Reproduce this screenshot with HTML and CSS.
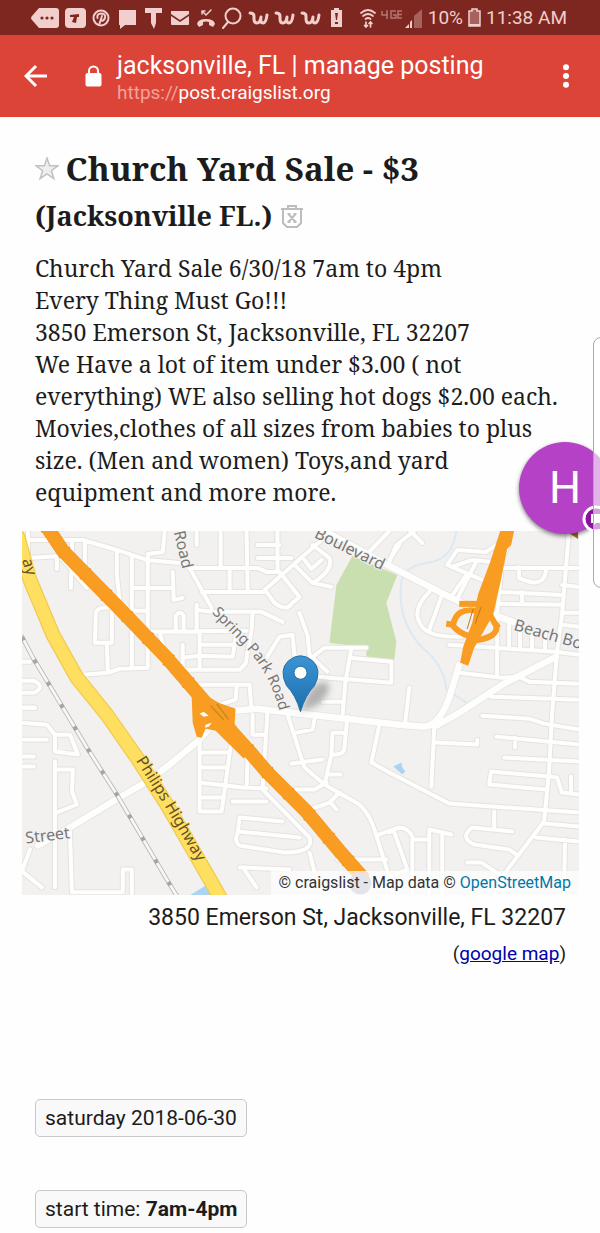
FILE: index.html
```html
<!DOCTYPE html>
<html lang="en">
<head>
<meta charset="utf-8">
<meta name="viewport" content="width=device-width, initial-scale=1">
<title>jacksonville, FL | manage posting</title>
<link rel="stylesheet" href="styles.css">
</head>
<body>
<div class="screen">
  <div class="status">
    <svg class="status-icons" viewBox="0 0 314 24" width="314" height="24" aria-hidden="true">
      <g fill="#f0cfcc">
        <path d="M8 2h17q3 0 3 3v14q0 3-3 3H8L1 14q-2-2 0-4z"/>
        <rect x="34" y="2" width="21" height="20" rx="4"/>
        <path d="M88 4h17v15H94l-5 4v-4h-1z"/>
        <path d="M114 2h17v5h-6v10l-2 6-3-6V7h-6z"/>
        <path d="M140 5h18v3l-9 6-9-6zM140 10l9 6 9-6v8q0 1-1 1h-16q-1 0-1-1z"/>
        <path d="M166 18q1-5 9-5t9 5l-2 3-4-2v-3q-3-1-6 0v3l-4 2z"/>
        <path d="M300 4h3V2h5v2h3v17h-11z"/>
      </g>
      <g fill="#7e2720">
        <circle cx="11" cy="12" r="1.6"/><circle cx="16" cy="12" r="1.6"/><circle cx="21" cy="12" r="1.6"/>
        <path d="M39 9l9-1v3h-2l-1 6-4-1 2-5h-4zM304 7h3l-1 7h-1zM304 16h3v2h-3z"/>
      </g>
      <g fill="none" stroke="#f0cfcc" stroke-width="2" stroke-linecap="round" stroke-linejoin="round">
        <circle cx="70" cy="12" r="7.5"/>
        <path d="M68 19l3-9M66.500 12q-1-4 3.500-4.500q5 0 4 4.500q-2 4-4 2"/>
        <path d="M171 5l4 4 5-5M171 8V5h3" stroke-width="1.500"/>
        <circle cx="202" cy="10" r="7.500"/><path d="M197 16l-5 6"/>
      </g>
      <g fill="none" stroke="#f0cfcc" stroke-width="3" stroke-linecap="round" stroke-linejoin="round">
        <path d="M219 7q4 0 4 3v3q0 4 3 4t4-6q-1 6 2 6t4-8"/>
        <path d="M245 7q4 0 4 3v3q0 4 3 4t4-6q-1 6 2 6t4-8"/>
        <path d="M271 7q4 0 4 3v3q0 4 3 4t4-6q-1 6 2 6t4-8"/>
      </g>
    </svg>
    <svg class="signal-icons" viewBox="0 0 64 24" width="64" height="24" aria-hidden="true">
      <g fill="none" stroke="#f0cfcc" stroke-width="1.700" stroke-linecap="round">
        <path d="M1 7q7-6 14 0M3 10q5-4 10 0M5.500 13q2.500-2 5 0"/>
        <path d="M6 16v5M4.500 19.500L6 21l1.500-1.500M10.500 21v-5M9 17.500l1.500-1.500 1.500 1.500"/>
      </g>
      <g fill="none" stroke="#b17671" stroke-width="1.500"><path d="M22 5v4h6M27 4v9M36 5h-5v7h5V9h-3M42 5h-4v7h4M38 8.500h4"/></g>
      <path fill="#a8625d" d="M54 10l8-7v19h-8z"/><path fill="#f0cfcc" d="M45 22l4-4v4zM50 16l2-2v8h-2z"/>
    </svg>
    <span>10%</span>
    <svg class="battery" viewBox="0 0 13 19" width="13" height="19" aria-hidden="true"><path d="M1 3h3V1h5v2h3v15H1z" fill="#a8625d" stroke="#f0cfcc" stroke-width="1.500"/><path d="M1 16h11v2H1z" fill="#f0cfcc"/></svg>
    <span>11:38 AM</span>
  </div>

  <header class="toolbar">
    <button class="icon-button back" type="button" aria-label="Back"><svg viewBox="0 0 24 24" width="24" height="24"><path d="M23 12H2M12 2L2 12l10 10" fill="none" stroke="#fff" stroke-width="3"/></svg></button>
    <svg class="lock" viewBox="0 0 17 22" width="17" height="22" aria-hidden="true"><path d="M4 9V6a4.500 4.500 0 0 1 9 0v3" fill="none" stroke="#fff" stroke-width="2"/><rect x="0.500" y="8" width="16" height="13.500" rx="2" fill="#fff"/></svg>
    <div class="heading">
      <div class="page-title">jacksonville, FL | manage posting</div>
      <div class="url"><span class="scheme">https://</span>post.craigslist.org</div>
    </div>
    <button class="icon-button more" type="button" aria-label="More options"><svg viewBox="0 0 8 24" width="8" height="24" fill="#fff"><circle cx="4" cy="3.200" r="3"/><circle cx="4" cy="12" r="3"/><circle cx="4" cy="20.800" r="3"/></svg></button>
  </header>

  <main class="posting">
    <h1 class="title">
      <svg class="star" viewBox="0 0 24 24" width="24" height="24" role="img" aria-label="Favorite"><path d="M12 1l2.600 7.700H23l-6.600 5 2.500 8L12 17l-6.900 4.700 2.500-8L1 8.700h8.400z" fill="#eee" stroke="#c2c2c2" stroke-width="1.500"/></svg>
      Church Yard Sale - $3
      <span class="place">(Jacksonville FL.)
        <svg class="trash" viewBox="0 0 22 23" width="22" height="23" role="img" aria-label="Hide"><path d="M0 4h22M7 4V1h8v3M2 4v14l4 4h10l4-4V4M7.500 9l7 8M14.500 9l-7 8M6.500 9h3M12.500 9h3M6.500 17h3M12.500 17h3" fill="none" stroke="#bdbdbd" stroke-width="2"/></svg>
      </span>
    </h1>
    <p class="body">Church Yard Sale 6/30/18 7am to 4pm<br>Every Thing Must Go!!!<br>3850 Emerson St, Jacksonville, FL 32207<br>We Have a lot of item under $3.00 ( not<br>everything) WE also selling hot dogs $2.00 each.<br>Movies,clothes of all sizes from babies to plus<br>size. (Men and women) Toys,and yard<br>equipment and more more.</p>

    <div class="map">
      <svg class="map-canvas" viewBox="22 531 558 365" role="img" aria-label="Map of 3850 Emerson St">
        <defs>
          <g id="streets">
            <path d="M28 540H83L117 550 147 560 180 563 190 568 212 608M28 531V558L60 556 87 588M57 557V569M71 573V588M72 541V553M85 541V565M117 552V575L120 602M132 557V612M165 531L163 552 148 554V668M197 531V545M132 588H173M173 572L174 600 183 598M133 611H148M145 632L247 631M176 630V616Q180 610 184 616V630M160 632L165 653M113 608Q96 606 96 614L95 643H112V612M107 645L108 673 84 675M108 673L120 669 148 668M132 632V668M183 645V670H240L246 664 252 630 253 613M183 658L200 656 233 657 237 632M200 632V670M200 645H235M197 605V632M197 610L213 612H262L283 622M202 592H265M190 568H258L267 572H280M22 662H30M22 681H34Q46 687 34 693H22M22 708H35"/>
            <path d="M221 531V568M247 531L248 590M230 570V590M258 545H280M258 558H292M278 531V572M265 590L330 533M267 592L275 603Q287 612 292 604L300 597 280 572M297 567L313 583 332 587M313 545L330 558Q334 570 315 582M305 560L312 569 322 560M200 685H250L252 711M237 687L236 700 217 706M300 613L308 635 310 655 328 672M267 658L280 637 293 635 295 656M312 658L325 648 352 648H367M352 648L346 682 343 717M350 658L392 662V683L317 677M323 702H343"/>
            <path d="M390 562L397 545 415 531M411 531L423 543M367 555L390 531M390 560L400 545M448 565L458 550 487 552 500 543M448 565L483 580M453 567L473 560 493 562M467 575L452 597M477 562L459 597M430 592Q412 610 421 624Q427 638 463 637M442 597L430 630M509 545L503 560 498 615M505 568H580M520 567V578Q545 590 547 570M570 531L563 615 558 652 553 715 550 772 545 822M502 592L563 595M502 604L563 605M523 592V604M563 585L580 587M563 613H580M563 625L580 627M450 645L557 652 580 655M498 618V675M510 620V647M521 628V648M533 633V649M546 635V650M460 673L503 678 520 677 530 682 580 684M492 697L580 700M410 688L406 722"/>
            <path d="M390 773L450 804 580 813M435 728L432 787M437 743L478 745V740M483 716L530 719 545 724 580 730M497 737L580 745M516 738V748M505 758L580 762M550 777L492 772 490 785 548 790M552 777L558 778 563 793 580 795M572 777V794M495 812V830M513 832L473 828Q460 838 475 845L510 850 517 855M545 822L507 872 495 896M545 824L580 827M537 838L580 842M566 840L565 896M468 863H482L505 878M390 833Q405 822 413 837V896M413 840H430M430 896V830L452 835M443 834V896M395 833L408 870 390 878"/>
            <path d="M288 715L305 768 325 785 360 805Q371 815 376 833L387 868 394 896M315 720L313 730 297 733M292 764L323 760M348 717L345 748Q345 756 332 755M325 785L332 755 333 733H345M330 775H341M200 783L243 788 267 789M280 790L315 790 327 783M310 810L330 803 340 793M331 803L337 810M380 725L372 763 392 774M268 712L263 790M253 715V735H265M248 760L247 787M232 740L222 812H200V740M200 753H230M200 768H228M200 798H223M233 802H267M263 790L310 838Q315 853 285 853L240 846Q234 842 238 834L240 818 283 822M238 832L300 838M310 853L315 872M240 868L290 870M243 868L257 888M338 860H387M380 835L400 828"/>
            <path d="M22 708H35M22 723L47 725 55 735H70L78 755 55 752V735M22 740H47M22 757H34M22 767H34M55 762V888M58 770H73L72 792 77 805 57 813M70 832L72 893H123V870H132V896M22 872L42 888M22 872L30 850"/>
          </g>
          <g id="avenues">
            <path d="M217 720L200 740 170 765 147 782 113 802 70 828 38 846M235 711L257 709 293 713 400 725 425 727Q440 726 450 698L460 665M435 727L457 715 503 685 557 657"/>
            <path d="M325 531L390 566 450 597 470 606 500 617 514 622"/>
          </g>
          <path id="i95" d="M47 527L63 551 120 609 167 658 205 702 250 752 267 772 307 812 343 855 365 880"/>
          <path id="us1" d="M18 537L30 580 53 635 77 678 107 715 137 758 167 805 217 892 224 905"/>
          <path id="rail" d="M22 637L33 658 63 708 87 748 117 795 170 885 178 898"/>
          <path id="spring" d="M212 613L243 645Q268 669 279 708L283 722"/>
          <path id="philips" d="M136 761L164 805 202 870"/>
          <linearGradient id="pinfill" x1="0" y1="0" x2="0" y2="1"><stop offset="0" stop-color="#3c94d4"/><stop offset="1" stop-color="#1b6fae"/></linearGradient>
          <filter id="soft" x="-50%" y="-50%" width="200%" height="200%"><feGaussianBlur stdDeviation="3"/></filter>
        </defs>
        <path fill="#f2f1f0" d="M22 531h558v365H22z"/>
        <path d="M457 531Q454 557 433 562 405 565 402 582 397 620 423 648 445 665 447 690L475 708" fill="none" stroke="#dde8f1" stroke-width="2"/>
        <path fill="#c9dfaf" d="M353 556l45 19-11 28 10 39-2 18-28-3v-9l-37-5 7-58z"/>
        <path fill="#abd3f3" d="M190 896l18-11 5 11zM394 767l8-4 1 5 3 4-3 3z"/>
        <g fill="none" stroke-linejoin="round" stroke-linecap="round">
          <use href="#streets" stroke="#e4e3e0" stroke-width="6"/>
          <use href="#avenues" stroke="#e4e3e0" stroke-width="8"/>
          <use href="#streets" stroke="#fefefc" stroke-width="4"/>
          <use href="#avenues" stroke="#fefefc" stroke-width="6.500"/>
          <use href="#rail" stroke="#b7b7b5" stroke-width="4.500"/>
          <use href="#rail" stroke="#f7f7f5" stroke-width="2.800"/>
          <use href="#rail" stroke="#a5a5a3" stroke-width="4" stroke-linecap="butt" stroke-dasharray="4 22"/>
          <use href="#us1" stroke="#efcb52" stroke-width="15"/>
          <use href="#us1" stroke="#ffdf60" stroke-width="12.500"/>
          <use href="#i95" stroke="#f69a20" stroke-width="14" stroke-linecap="butt"/>
          <use href="#i95" stroke="#ef9320" stroke-width="15" stroke-linecap="butt" stroke-dasharray="2 28"/>
          <use href="#i95" stroke="#f99c22" stroke-width="12.500" stroke-linecap="butt"/>
        </g>
        <path fill="#f99c22" d="M192 697l12-3 15 9 17 6-1 15 17 27-8 8-28-28-10-2-4 9-5-1-4-14z"/>
        <path d="M200 714l4-2 5 4-5 1zM206 725l6-2-3 4-4 1z" fill="#fff"/>
        <path d="M211 706l13 14M217 704l12 16" stroke="#c98a22" stroke-width="1.500"/>
        <path fill="#f99c22" d="M501 531h14l-3 14-4 4-6 30-8 36-19 33-6 18-8-3 3-16 9-24 6-29 12-32z"/>
        <g fill="none" stroke="#f99c22" stroke-linejoin="round" stroke-width="6">
          <path d="M482 604H460"/>
          <path d="M478 611Q457 607 454 625L447 624M452 624Q460 634 470 636M486 606L497 626 500 624M497 626Q500 638 472 641"/>
        </g>
        <path d="M474 609l-6 20M482 607l-6 17" stroke="#bd781b" stroke-width="1"/>
        <g class="map-label">
          <text transform="translate(174 532) rotate(77)">Road</text>
          <text transform="translate(22 560) rotate(74)" class="dark">ay</text>
          <text transform="translate(314 537) rotate(26)">Boulevard</text>
          <text transform="translate(514 630) rotate(16)">Beach Bo</text>
          <text transform="translate(26 844) rotate(-7)">Street</text>
          <text class="small"><textPath href="#spring">Spring Park Road</textPath></text>
          <text class="dark"><textPath href="#philips">Philips Highway</textPath></text>
        </g>
        <path d="M567 531l12 8V531z" fill="#a7681b"/>
        <circle cx="361" cy="884" r="11" fill="#aaa6bd"/>
        <path d="M301 712l8-20q12-14 20-8 3 10-12 22z" fill="#555" opacity="0.400" filter="url(#soft)"/>
        <path d="M301 712q-5-17-14-26-8-16 2-25 12-10 24 0 10 9 2 25-9 9-14 26z" fill="url(#pinfill)" stroke="#2870a3" stroke-width="1"/>
        <circle cx="301" cy="673" r="6.500" fill="#fff" stroke="#2870a3" stroke-width="1"/>
      </svg>
      <div class="attribution">© craigslist - Map data © <a href="#osm">OpenStreetMap</a></div>
    </div>

    <div class="address">3850 Emerson St, Jacksonville, FL 32207</div>
    <div class="map-link">(<a href="#map">google map</a>)</div>
    <div class="attributes">
      <span class="attribute">saturday 2018-06-30</span>
      <span class="attribute">start time: <b>7am-4pm</b></span>
    </div>
  </main>

  <div class="overlay">
    <div class="avatar">H</div>
    <svg class="badge" viewBox="0 0 28 28" width="28" height="28" aria-hidden="true"><circle cx="14" cy="14" r="12" fill="#8d12a0" stroke="#fff" stroke-width="3"/><path d="M9 9h12v9h-7l-3 3v-3H9z" fill="#fff"/></svg>
    <div class="edge-handle"></div>
  </div>
</div>
</body>
</html>
```
FILE: styles.css
```css
* { box-sizing: border-box; }
body { margin: 0; background: #fefefe; color: #1c1c1c; font-family: Roboto, "Liberation Sans", sans-serif; }
.screen { position: relative; overflow: hidden; padding-bottom: 5px; }

.status { display: flex; align-items: center; height: 35px; padding: 0 33px 0 31px; background: #7e2720; color: #f0cfcc; font-size: 19px; white-space: nowrap; }
.signal-icons { margin-left: 15px; margin-right: auto; }
.battery { margin: 0 5px; }

.toolbar { display: flex; align-items: center; height: 82px; padding: 0 30px 0 24px; background: #dc4437; color: #fff; }
.icon-button { display: flex; padding: 0; border: 0; background: none; }
.lock { margin: 0 15px 0 37px; }
.heading { flex: 1; padding-top: 3px; white-space: nowrap; }
.page-title { font-size: 25px; line-height: 30px; }
.url { font-size: 19px; line-height: 24px; }
.scheme { color: #f2a29b; }

.posting { padding: 28px 21px 0 22px; }
.title { margin: 0 13px; font-family: "Noto Serif", "Droid Serif", "DejaVu Serif", serif; font-size: 33px; line-height: 48px; }
.star { margin-right: -2px; vertical-align: 0; }
.place { display: block; font-size: 27px; line-height: 46px; }
.trash { margin-left: 2px; vertical-align: -2px; }
.body { margin: 13px 0 23px 13px; font-family: "Noto Serif", "Droid Serif", "DejaVu Serif", serif; font-size: 23px; line-height: 32px; white-space: nowrap; }

.map { position: relative; }
.map-canvas { display: block; width: 100%; height: auto; }
.map-label text { font-family: "Noto Sans", "Open Sans", sans-serif; font-size: 16px; fill: #777; stroke: #f4f3f1; stroke-width: 2px; paint-order: stroke; }
.map-label .small { font-size: 15px; }
.map-label .dark { fill: #66502a; stroke: #ffdf60; }
.attribution { position: absolute; right: 0; bottom: 0; padding: 0 8px; background: rgba(255, 255, 255, 0.7); color: #333; font-size: 16px; line-height: 24px; }
.attribution a { color: #0078a8; text-decoration: none; }

.address { padding: 8px 13px 0; font-size: 23px; line-height: 30px; text-align: right; }
.map-link { padding: 7px 13px 0; font-size: 19px; line-height: 28px; text-align: right; }
.map-link a { color: #00a; }
.attributes { display: flex; flex-direction: column; align-items: flex-start; gap: 53px; margin: 131px 13px 0; }
.attribute { padding: 4px 9px; border: 1px solid #c8c8c8; border-radius: 5px; background: #f9f9f9; font-size: 21px; line-height: 28px; }

.overlay { position: absolute; top: 337px; right: 0; width: 81px; height: 251px; }
.avatar { position: absolute; top: 105px; left: 0; width: 92px; height: 92px; border-radius: 50%; background: #b542c6; color: #fff; font-size: 45px; line-height: 92px; text-align: center; box-shadow: 0 2px 4px rgba(0, 0, 0, 0.5); }
.badge { position: absolute; top: 168px; left: 63px; }
.edge-handle { position: absolute; top: 0; left: 74px; width: 20px; height: 251px; border: 1px solid #aaa; border-radius: 8px; background: rgba(255, 255, 255, 0.6); }
```
